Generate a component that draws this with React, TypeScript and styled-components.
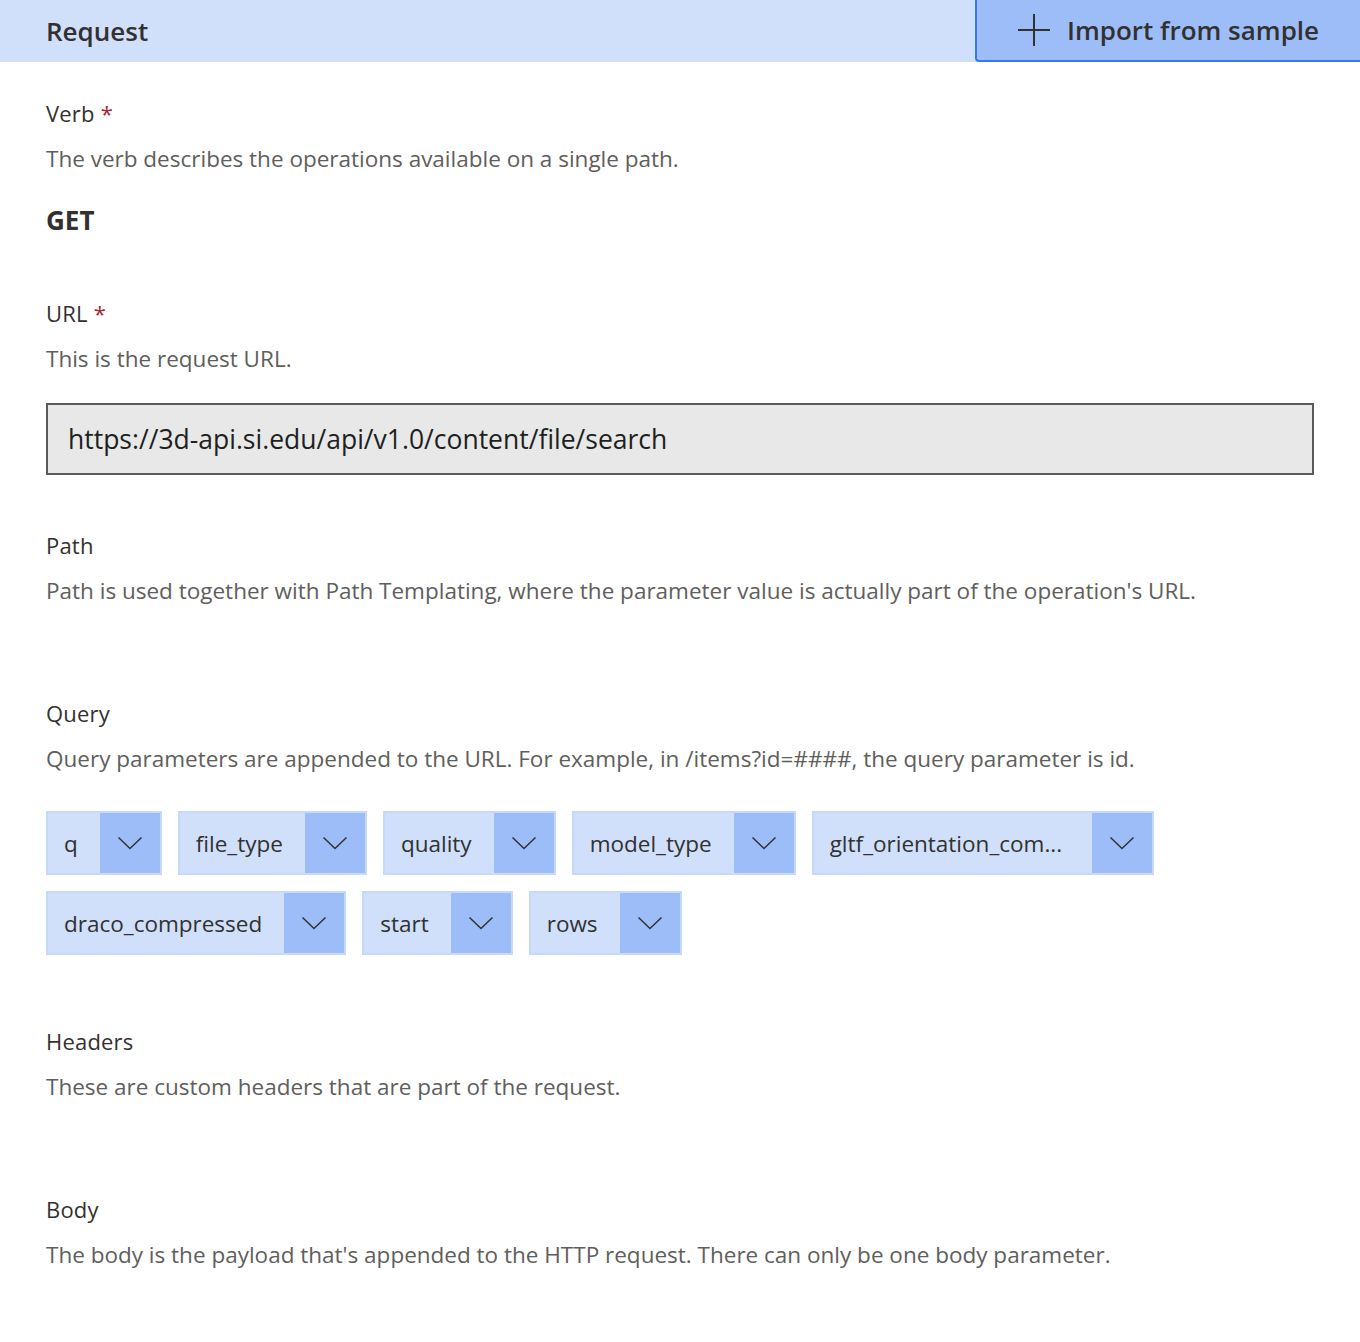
import React from "react";
import styled, { createGlobalStyle } from "styled-components";

const Global = createGlobalStyle`
  html, body { margin: 0; padding: 0; background: #ffffff; }
  body { font-family: "Open Sans", "Noto Sans", sans-serif; color: #323130; }
  * { box-sizing: border-box; }
`;

const Page = styled.div`
  width: 1360px;
  min-height: 1342px;
  background: #fff;
`;

const HeaderBar = styled.div`
  height: 62px;
  background: #d0e0fb;
  display: flex;
  align-items: stretch;
  justify-content: space-between;
`;

const HeaderTitle = styled.div`
  padding-left: 46px;
  font-size: 26px;
  font-weight: 600;
  line-height: 62px;
  color: #323130;
`;

const ImportButton = styled.button`
  width: 385px;
  height: 62px;
  border: none;
  border-left: 2px solid #3b78e7;
  border-bottom: 2px solid #3b78e7;
  border-bottom-left-radius: 4px;
  background: #9dbdf8;
  display: flex;
  align-items: center;
  gap: 16px;
  padding: 0 0 0 40px;
  font-family: inherit;
  font-size: 26px;
  font-weight: 600;
  color: #323130;
  cursor: pointer;
`;

const Content = styled.div`
  padding: 37px 46px 0 46px;
`;

const Section = styled.div<{ $after: number }>`
  display: flex;
  flex-direction: column;
  margin-bottom: ${(p) => p.$after}px;
`;

const Label = styled.div`
  font-size: 22px;
  line-height: 28px;
  color: #323130;
  letter-spacing: 0.2px;
`;

const Required = styled.span`
  color: #a4262c;
  margin-left: 6px;
`;

const Description = styled.div`
  margin-top: 16px;
  font-size: 22.5px;
  line-height: 32px;
  color: #605e5c;
`;

const VerbValue = styled.div`
  margin-top: 29px;
  font-size: 26px;
  line-height: 32px;
  font-weight: 700;
  color: #323130;
`;

const UrlBox = styled.div`
  margin-top: 28px;
  width: 1268px;
  height: 72px;
  border: 2px solid #5a5a5a;
  background: #e8e8e8;
  display: flex;
  align-items: center;
  padding-left: 20px;
  font-size: 26.5px;
  color: #201f1e;
`;

const ChipGrid = styled.div`
  margin-top: 36px;
  display: flex;
  flex-wrap: wrap;
  gap: 16px 16px;
  width: 1160px;
`;

const Chip = styled.div`
  height: 64px;
  display: flex;
  align-items: stretch;
  background: #d0e0fb;
  border: 2px solid #c6d9fa;
`;

const ChipName = styled.div<{ $width?: number }>`
  padding: 0 22px 0 16px;
  display: flex;
  align-items: center;
  font-size: 22.5px;
  color: #323130;
  white-space: nowrap;
  overflow: hidden;
  width: ${(p) => (p.$width ? `${p.$width}px` : "auto")};
  span {
    overflow: hidden;
    text-overflow: ellipsis;
  }
`;

const ChipToggle = styled.div`
  width: 60px;
  background: #9dbdf8;
  display: flex;
  align-items: center;
  justify-content: center;
`;

const Chevron = () => (
  <svg width="26" height="14" viewBox="0 0 26 14" fill="none">
    <path d="M1.5 1.5 L13 12.5 L24.5 1.5" stroke="#323130" strokeWidth="1.5" />
  </svg>
);

const Plus = () => (
  <svg width="34" height="34" viewBox="0 0 34 34" fill="none">
    <path d="M17 1 V33 M1 17 H33" stroke="#323130" strokeWidth="2" />
  </svg>
);

const params: { name: string; width?: number }[] = [
  { name: "q" },
  { name: "file_type" },
  { name: "quality" },
  { name: "model_type" },
  { name: "gltf_orientation_com...", width: 278 },
  { name: "draco_compressed" },
  { name: "start" },
  { name: "rows" },
];

export default function App() {
  return (
    <Page>
      <Global />
      <HeaderBar>
        <HeaderTitle>Request</HeaderTitle>
        <ImportButton>
          <Plus />
          Import from sample
        </ImportButton>
      </HeaderBar>
      <Content>
        <Section $after={63}>
          <Label>
            Verb<Required>*</Required>
          </Label>
          <Description>The verb describes the operations available on a single path.</Description>
          <VerbValue>GET</VerbValue>
        </Section>
        <Section $after={56}>
          <Label>
            URL<Required>*</Required>
          </Label>
          <Description>This is the request URL.</Description>
          <UrlBox>https://3d-api.si.edu/api/v1.0/content/file/search</UrlBox>
        </Section>
        <Section $after={92}>
          <Label>Path</Label>
          <Description>
            Path is used together with Path Templating, where the parameter value is actually part of the operation's URL.
          </Description>
        </Section>
        <Section $after={72}>
          <Label>Query</Label>
          <Description>
            Query parameters are appended to the URL. For example, in /items?id=####, the query parameter is id.
          </Description>
          <ChipGrid>
            {params.map((p) => (
              <Chip key={p.name}>
                <ChipName $width={p.width}>
                  <span>{p.name}</span>
                </ChipName>
                <ChipToggle>
                  <Chevron />
                </ChipToggle>
              </Chip>
            ))}
          </ChipGrid>
        </Section>
        <Section $after={92}>
          <Label>Headers</Label>
          <Description>These are custom headers that are part of the request.</Description>
        </Section>
        <Section $after={0}>
          <Label>Body</Label>
          <Description>
            The body is the payload that's appended to the HTTP request. There can only be one body parameter.
          </Description>
        </Section>
      </Content>
    </Page>
  );
}
